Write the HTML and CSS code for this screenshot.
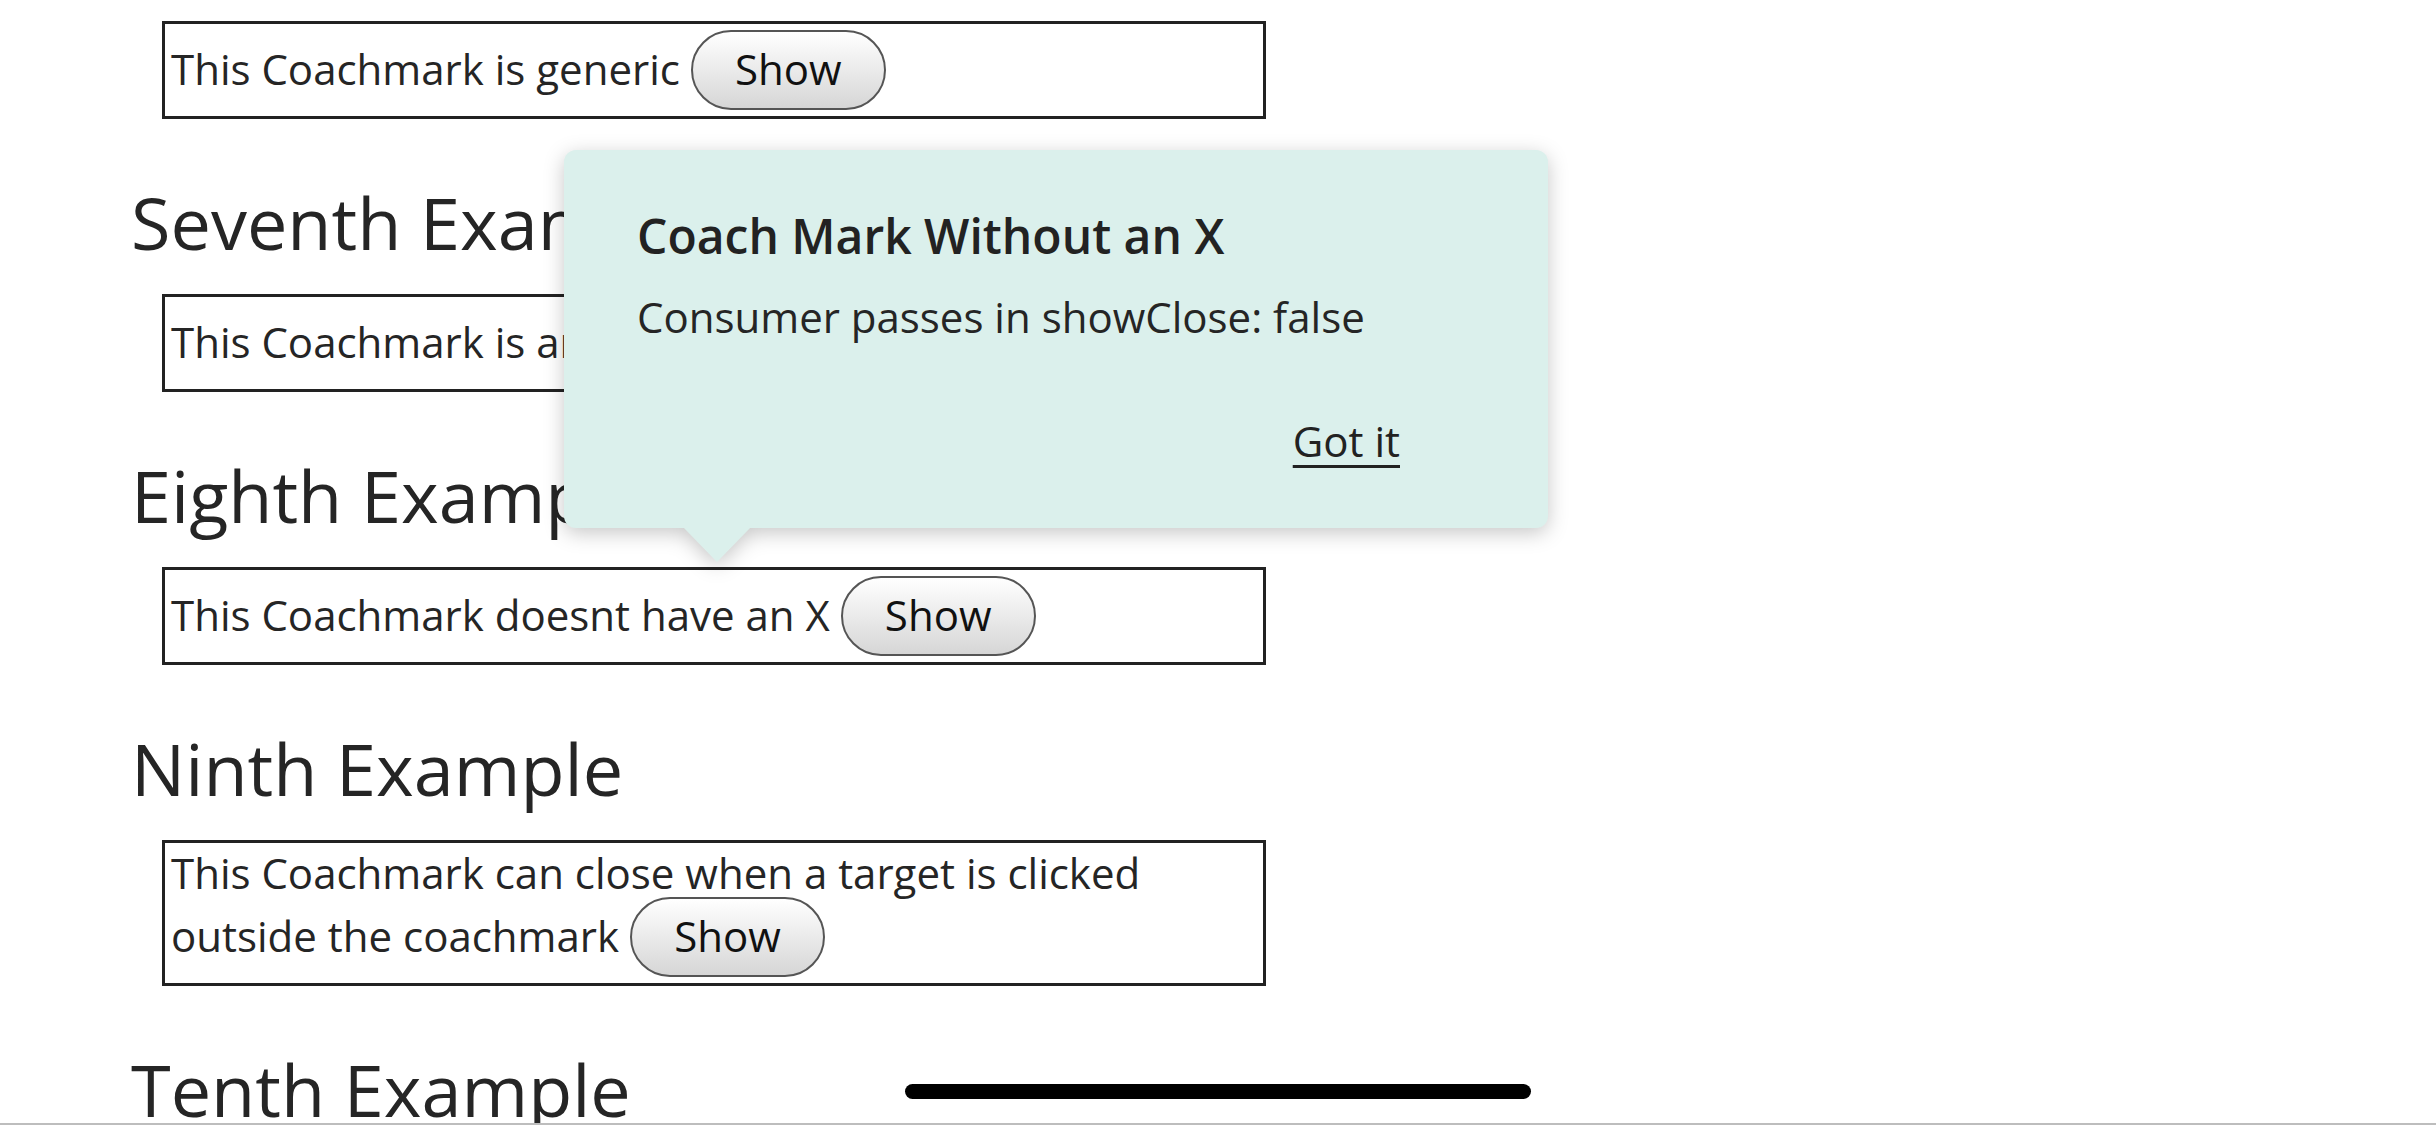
FILE: index.html
```html
<!DOCTYPE html>
<html lang="en">
<head>
<meta charset="utf-8">
<title>Coachmark examples</title>
<link rel="stylesheet" href="styles.css">
</head>
<body>
<main class="page">
  <div class="example-box first">This Coachmark is generic <button class="show-btn">Show</button></div>

  <h2 class="example-title">Seventh Example</h2>
  <div class="example-box">This Coachmark is anchored left <button class="show-btn">Show</button></div>

  <h2 class="example-title">Eighth Example</h2>
  <div class="example-box">This Coachmark doesnt have an X <button class="show-btn">Show</button></div>

  <h2 class="example-title">Ninth Example</h2>
  <div class="example-box">This Coachmark can close when a target is clicked outside the coachmark <button class="show-btn">Show</button></div>

  <h2 class="example-title">Tenth Example</h2>
</main>

<div class="coachmark">
  <div class="coachmark-body">
    <h3 class="coachmark-title">Coach Mark Without an X</h3>
    <p class="coachmark-text">Consumer passes in showClose: false</p>
    <div class="coachmark-footer">
      <a class="got-it" href="#">Got it</a>
    </div>
  </div>
  <div class="coachmark-arrow"></div>
</div>

<div class="home-indicator"></div>
</body>
</html>
```

FILE: styles.css
```css
html {
  overflow: hidden;
  height: 100%;
}

body {
  margin: 0;
  height: 100%;
  background: #ffffff;
  font-family: "Open Sans", "Noto Sans", sans-serif;
  color: #252525;
  position: relative;
  overflow: hidden;
  border-bottom: 2px solid #bdbdbd;
  box-sizing: border-box;
}

.page {
  padding-left: 131px;
}

.example-box {
  margin-left: 31px;
  width: 1104px;
  box-sizing: border-box;
  border: 3px solid #222222;
  padding: 6px;
  font-size: 42px;
  line-height: 48px;
}

.example-box.first {
  margin-top: 21px;
}

.show-btn {
  display: inline-block;
  box-sizing: border-box;
  height: 80px;
  width: 195px;
  padding: 0 0 3px;
  border: 2px solid #555555;
  border-radius: 40px;
  background: linear-gradient(#ffffff, #d6d6d6);
  font-family: "Open Sans", "Noto Sans", sans-serif;
  font-size: 42px;
  line-height: normal;
  color: #111111;
  vertical-align: baseline;
}

.example-title {
  margin: 54px 0 23px;
  font-size: 72px;
  font-weight: 400;
  line-height: normal;
  color: #252525;
}

.coachmark {
  position: absolute;
  left: 564px;
  top: 150px;
  width: 984px;
  filter: drop-shadow(0 5px 10px rgba(0, 0, 0, 0.22));
}

.coachmark-body {
  box-sizing: border-box;
  height: 378px;
  background: #dbf0ec;
  border-radius: 12px;
  padding: 53px 72px 0 73px;
  display: flex;
  flex-direction: column;
}

.coachmark-title {
  margin: 0;
  font-size: 48px;
  font-weight: 600;
  line-height: normal;
  color: #222222;
}

.coachmark-text {
  margin: 20px 0 0;
  font-size: 42px;
  line-height: normal;
  color: #252525;
}

.coachmark-footer {
  display: flex;
  justify-content: flex-end;
  margin-top: 67px;
  padding-right: 76px;
}

.got-it {
  font-size: 42px;
  line-height: normal;
  color: #222222;
  text-decoration: underline;
  text-decoration-thickness: 3px;
  text-underline-offset: 8px;
}

.coachmark-arrow {
  position: absolute;
  left: 119px;
  top: 377px;
  width: 68px;
  height: 35px;
  background: #dbf0ec;
  clip-path: polygon(0 0, 100% 0, 50% 100%);
}

.home-indicator {
  position: absolute;
  left: 50%;
  bottom: 24px;
  width: 626px;
  height: 15px;
  margin-left: -313px;
  border-radius: 8px;
  background: #000000;
}
```
